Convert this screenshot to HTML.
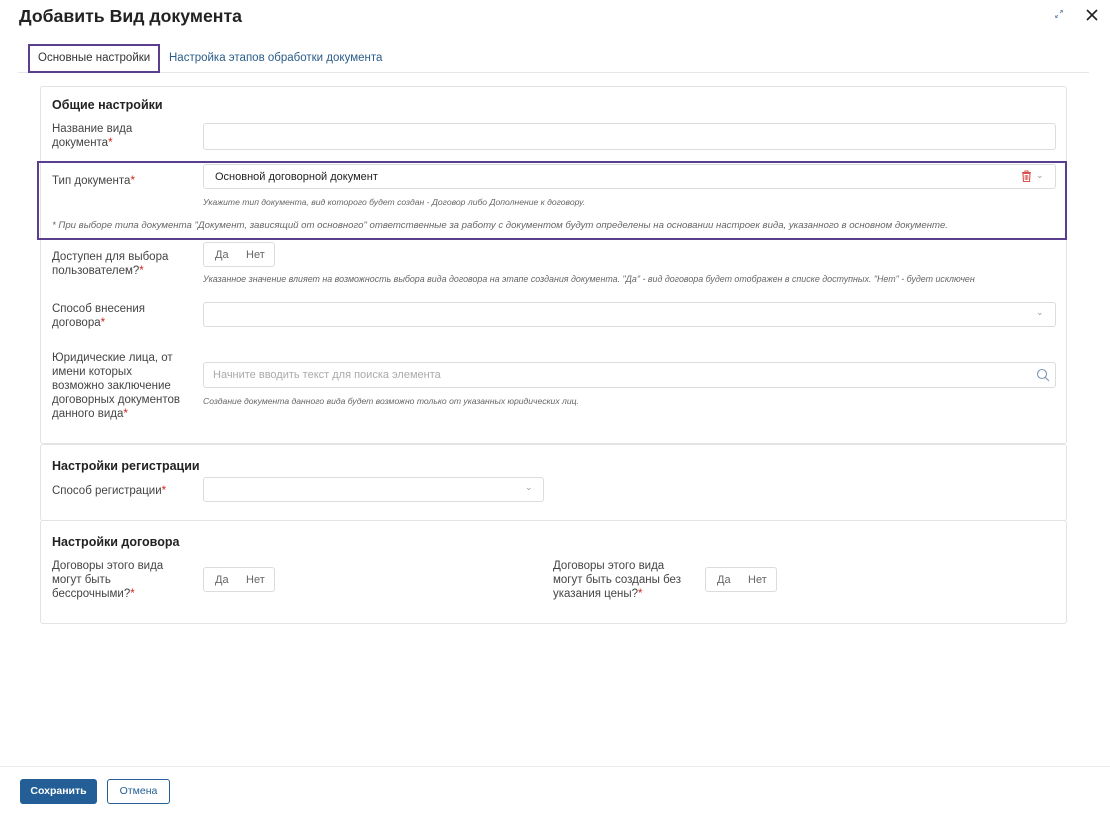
<!DOCTYPE html>
<html><head><meta charset="utf-8"><style>
*{box-sizing:border-box;margin:0;padding:0}
body{width:1110px;height:817px;background:#fff;font-family:"Liberation Sans",sans-serif;color:#333;position:relative;overflow:hidden}
.a{position:absolute}
.lbl{position:absolute;left:52px;font-size:11.5px;line-height:14px;color:#444}
.req{color:#d0261d}
.inp{position:absolute;border:1px solid #dcdcdc;border-radius:3px;background:#fff}
.hint{position:absolute;font-size:8.6px;font-style:italic;color:#666;white-space:nowrap}
.h{position:absolute;left:52px;font-size:12.5px;font-weight:bold;color:#222}
.panel{position:absolute;left:40px;width:1027px;border:1px solid #e3e3e3;border-radius:3px}
.tog{position:absolute;border:1px solid #dcdcdc;border-radius:3px;width:72px;height:25px;font-size:11px;color:#666}
.tog span{position:absolute;top:6px}
.chev{position:absolute;font-size:9px;color:#999}
</style></head><body>
<div class="a" style="left:19px;top:6px;font-size:17.7px;font-weight:bold;color:#222">Добавить Вид документа</div>
<svg class="a" style="left:1054px;top:9px" width="10" height="10" viewBox="0 0 10 10"><path d="M1.5 8.5L4 6M1.5 8.5V6.5M1.5 8.5H3.5M8.5 1.5L6 4M8.5 1.5V3.5M8.5 1.5H6.5" stroke="#6b8fb5" stroke-width=".9" fill="none"/></svg>
<svg class="a" style="left:1086px;top:9px" width="12" height="12" viewBox="0 0 12 12"><path d="M1 1L11 11M11 1L1 11" stroke="#222" stroke-width="1.6"/></svg>

<div class="a" style="left:18px;top:72px;width:1071px;height:1px;background:#e6e6e6"></div>
<div class="a" style="left:28px;top:44px;width:132px;height:29px;border:2px solid #5b3f8c"></div>
<div class="a" style="left:38px;top:52px;font-size:11.5px;color:#333">Основные настройки</div>
<div class="a" style="left:169px;top:52px;font-size:11.5px;color:#2b5c8a">Настройка этапов обработки документа</div>

<div class="panel" style="top:86px;height:358px"></div>
<div class="h" style="top:98px">Общие настройки</div>
<div class="lbl" style="top:122px">Название вида<br>документа<span class="req">*</span></div>
<div class="inp" style="left:203px;top:123px;width:853px;height:27px"></div>

<div class="a" style="left:37px;top:161px;width:1030px;height:79px;border:2px solid #5b3f8c"></div>
<div class="lbl" style="top:174px">Тип документа<span class="req">*</span></div>
<div class="inp" style="left:203px;top:164px;width:853px;height:25px"></div>
<div class="a" style="left:215px;top:171px;font-size:11px;color:#222">Основной договорной документ</div>
<svg class="a" style="left:1021px;top:170px" width="11" height="12" viewBox="0 0 11 12"><path d="M1 2.5H10M4 2.5V1H7V2.5M2 3.5H9L8.5 11.5H2.5Z" stroke="#d9534f" stroke-width="1.1" fill="none"/><path d="M4.2 5V10M5.5 5V10M6.8 5V10" stroke="#d9534f" stroke-width=".8"/></svg>
<div class="chev" style="left:1036px;top:170px">⌄</div>
<div class="hint" style="left:203px;top:197px">Укажите тип документа, вид которого будет создан - Договор либо Дополнение к договору.</div>
<div class="hint" style="left:52px;top:220px;font-size:9.6px">* При выборе типа документа "Документ, зависящий от основного" ответственные за работу с документом будут определены на основании настроек вида, указанного в основном документе.</div>

<div class="lbl" style="top:250px">Доступен для выбора<br>пользователем?<span class="req">*</span></div>
<div class="tog" style="left:203px;top:242px"><span style="left:11px">Да</span><span style="left:42px">Нет</span></div>
<div class="hint" style="left:203px;top:274px;font-size:8.9px">Указанное значение влияет на возможность выбора вида договора на этапе создания документа. "Да" - вид договора будет отображен в списке доступных. "Нет" - будет исключен</div>

<div class="lbl" style="top:302px">Способ внесения<br>договора<span class="req">*</span></div>
<div class="inp" style="left:203px;top:302px;width:853px;height:25px"></div>
<div class="chev" style="left:1036px;top:307px">⌄</div>

<div class="lbl" style="top:351px">Юридические лица, от<br>имени которых<br>возможно заключение<br>договорных документов<br>данного вида<span class="req">*</span></div>
<div class="inp" style="left:203px;top:362px;width:853px;height:26px"></div>
<div class="a" style="left:213px;top:369px;font-size:11px;color:#aaa">Начните вводить текст для поиска элемента</div>
<svg class="a" style="left:1036px;top:368px" width="14" height="14" viewBox="0 0 14 14"><circle cx="6" cy="6" r="4.5" stroke="#7f9ab5" stroke-width="1.1" fill="none"/><path d="M9.3 9.3L13 13" stroke="#7f9ab5" stroke-width="1.1"/></svg>
<div class="hint" style="left:203px;top:396px">Создание документа данного вида будет возможно только от указанных юридических лиц.</div>

<div class="panel" style="top:444px;height:77px"></div>
<div class="h" style="top:459px">Настройки регистрации</div>
<div class="lbl" style="top:484px">Способ регистрации<span class="req">*</span></div>
<div class="inp" style="left:203px;top:477px;width:341px;height:25px"></div>
<div class="chev" style="left:525px;top:482px">⌄</div>

<div class="panel" style="top:520px;height:104px"></div>
<div class="h" style="top:535px">Настройки договора</div>
<div class="lbl" style="top:559px;line-height:14px">Договоры этого вида<br>могут быть<br>бессрочными?<span class="req">*</span></div>
<div class="tog" style="left:203px;top:567px"><span style="left:11px">Да</span><span style="left:42px">Нет</span></div>
<div class="lbl" style="left:553px;top:559px">Договоры этого вида<br>могут быть созданы без<br>указания цены?<span class="req">*</span></div>
<div class="tog" style="left:705px;top:567px"><span style="left:11px">Да</span><span style="left:42px">Нет</span></div>

<div class="a" style="left:0;top:766px;width:1110px;height:1px;background:#ececec"></div>
<div class="a" style="left:20px;top:779px;width:77px;height:25px;background:#235f96;border-radius:3px;color:#fff;font-size:10.5px;font-weight:bold;text-align:center;line-height:25px">Сохранить</div>
<div class="a" style="left:107px;top:779px;width:63px;height:25px;border:1px solid #235f96;border-radius:3px;color:#235f96;font-size:10.5px;text-align:center;line-height:23px">Отмена</div>
</body></html>
